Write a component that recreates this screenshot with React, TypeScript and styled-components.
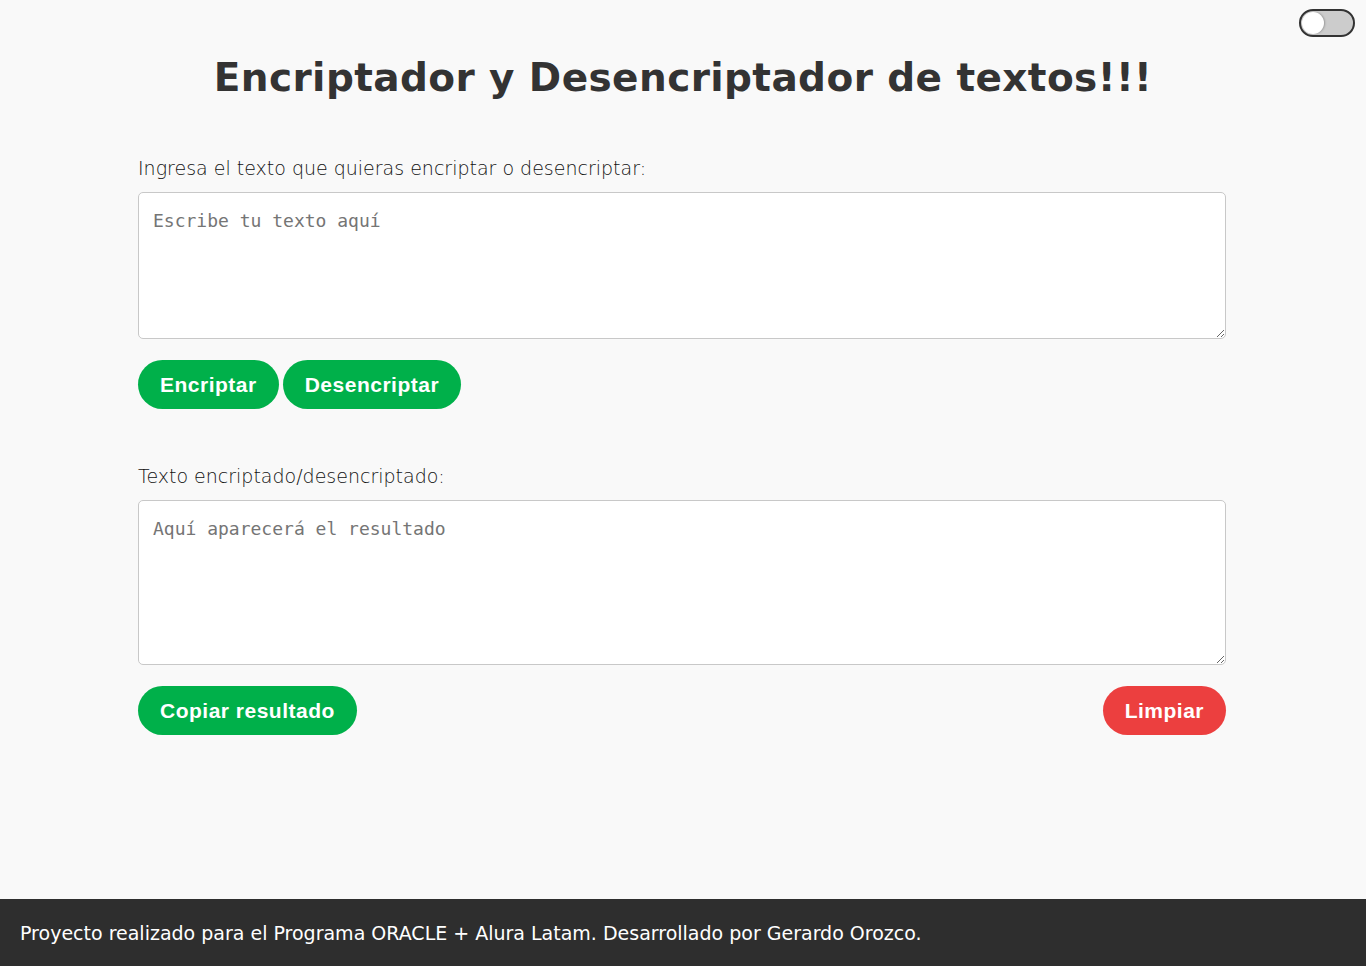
import React, { useState } from "react";
import styled, { createGlobalStyle } from "styled-components";

const GlobalStyle = createGlobalStyle`
    * { box-sizing: border-box; }
    body {
        margin: 0;
        background-color: #f9f9f9;
        font-family: "DejaVu Sans", sans-serif;
        color: #333;
    }
`

export const Page = styled.div`
    min-height: 100vh;
    display: flex;
    flex-direction: column;
    position: relative;
`

export const Toggle = styled.button<{ on: boolean }>`
    position: absolute;
    top: 9px;
    right: 11px;
    width: 56px;
    height: 28px;
    border: 2px solid #333;
    border-radius: 14px;
    background-color: ${({ on }) => (on ? "#333" : "#ccc")};
    padding: 0;
    cursor: pointer;

    &::after {
        content: "";
        position: absolute;
        top: 1px;
        left: ${({ on }) => (on ? "28px" : "1px")};
        width: 22px;
        height: 22px;
        border-radius: 50%;
        background-color: #fff;
        box-shadow: 1px 0 2px rgba(0, 0, 0, 0.25);
    }
`

export const Title = styled.h1`
    margin: 53px 0 0;
    text-align: center;
    font-family: "DejaVu Sans", sans-serif;
    font-weight: bold;
    font-size: 39px;
    line-height: 50px;
    letter-spacing: 0.4px;
    color: #333;
`

export const Main = styled.main`
    width: 1088px;
    margin: 53px 0 0 138px;
`

export const Label = styled.label`
    display: block;
    font-family: "DejaVu Sans", sans-serif;
    font-weight: 200;
    font-size: 19px;
    line-height: 24px;
    color: #111;
    margin-bottom: 12px;
`

export const TextArea = styled.textarea<{ h: number }>`
    display: block;
    width: 100%;
    height: ${({ h }) => h}px;
    padding: 15px 14px 14px;
    border: 1px solid #c8c8c8;
    border-radius: 5px;
    background: #fff;
    font-family: "DejaVu Sans Mono", monospace;
    font-size: 18px;
    line-height: 26px;
    color: #333;
    resize: vertical;
    outline: none;

    &::placeholder {
        color: #757575;
    }
`

export const Row = styled.div<{ spread?: boolean }>`
    display: flex;
    gap: 4px;
    justify-content: ${({ spread }) => (spread ? "space-between" : "flex-start")};
    margin-top: 21px;
`

export const Button = styled.button<{ danger?: boolean }>`
    height: 49px;
    padding: 0 22px;
    border: none;
    border-radius: 25px;
    background-color: ${({ danger }) => (danger ? "#ec3f3f" : "#00b04a")};
    color: #fff;
    font-family: "Liberation Sans", Arial, sans-serif;
    font-weight: bold;
    font-size: 21px;
    letter-spacing: 0.5px;
    cursor: pointer;
`

export const Spacer = styled.div`
    height: 55px;
`

export const Footer = styled.footer`
    margin-top: auto;
    height: 67px;
    background-color: #2e2e2e;
    color: #fff;
    display: flex;
    align-items: center;
    padding: 0 20px;
    font-family: "DejaVu Sans", sans-serif;
    font-size: 19px;
`

const App: React.FC = () => {
    const [oscuro, setOscuro] = useState(false);
    const [texto, setTexto] = useState("");
    const [resultado, setResultado] = useState("");

    const encriptar = () => {
        setResultado(
            texto
                .replace(/e/g, "enter")
                .replace(/i/g, "imes")
                .replace(/a/g, "ai")
                .replace(/o/g, "ober")
                .replace(/u/g, "ufat")
        );
    };

    const desencriptar = () => {
        setResultado(
            texto
                .replace(/enter/g, "e")
                .replace(/imes/g, "i")
                .replace(/ai/g, "a")
                .replace(/ober/g, "o")
                .replace(/ufat/g, "u")
        );
    };

    return (
        <>
            <GlobalStyle />
            <Page>
                <Toggle on={oscuro} onClick={() => setOscuro(!oscuro)} aria-label="modo" />
                <Title>Encriptador y Desencriptador de textos!!!</Title>
                <Main>
                    <Label htmlFor="entrada">Ingresa el texto que quieras encriptar o desencriptar:</Label>
                    <TextArea
                        id="entrada"
                        h={147}
                        placeholder="Escribe tu texto aquí"
                        value={texto}
                        onChange={(e) => setTexto(e.target.value)}
                    />
                    <Row>
                        <Button onClick={encriptar}>Encriptar</Button>
                        <Button onClick={desencriptar}>Desencriptar</Button>
                    </Row>
                    <Spacer />
                    <Label htmlFor="salida">Texto encriptado/desencriptado:</Label>
                    <TextArea id="salida" h={165} placeholder="Aquí aparecerá el resultado" value={resultado} readOnly />
                    <Row spread>
                        <Button onClick={() => navigator.clipboard?.writeText(resultado)}>Copiar resultado</Button>
                        <Button danger onClick={() => { setTexto(""); setResultado(""); }}>Limpiar</Button>
                    </Row>
                </Main>
                <Footer>Proyecto realizado para el Programa ORACLE + Alura Latam. Desarrollado por Gerardo Orozco.</Footer>
            </Page>
        </>
    );
};

export default App;
